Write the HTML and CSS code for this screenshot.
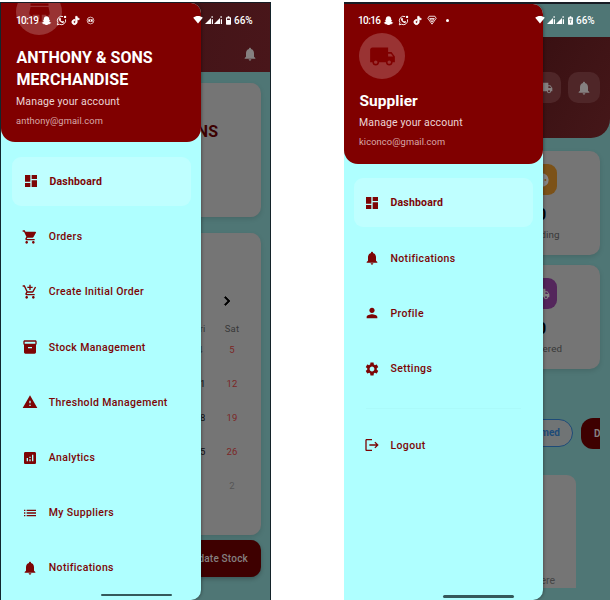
FILE: index.html
```
<!DOCTYPE html>
<html lang="en">
<head>
<meta charset="utf-8">
<title>Store and supplier menus</title>
<link rel="stylesheet" href="styles.css">
</head>
<body>
<svg class="defs" aria-hidden="true">
  <symbol id="dashboard" viewBox="0 0 24 24"><path d="M3 13h8V3H3v10zm0 8h8v-6H3v6zm10 0h8V11h-8v10zm0-18v6h8V3h-8z"/></symbol>
  <symbol id="cart" viewBox="0 0 24 24"><path d="M7 18c-1.1 0-1.99.9-1.99 2S5.9 22 7 22s2-.9 2-2-.9-2-2-2zM1 2v2h2l3.6 7.59-1.35 2.45c-.16.28-.25.61-.25.96 0 1.1.9 2 2 2h12v-2H7.42c-.14 0-.25-.11-.25-.25l.03-.12.9-1.63h7.45c.75 0 1.41-.41 1.75-1.03l3.58-6.49c.08-.14.12-.31.12-.48 0-.55-.45-1-1-1H5.21l-.94-2H1zm16 16c-1.1 0-1.99.9-1.99 2s.89 2 1.99 2 2-.9 2-2-.9-2-2-2z"/></symbol>
  <symbol id="cart-add" viewBox="0 0 24 24"><path d="M11 9h2V6h3V4h-3V1h-2v3H8v2h3v3zm-4 9c-1.1 0-1.99.9-1.99 2S5.9 22 7 22s2-.9 2-2-.9-2-2-2zm10 0c-1.1 0-1.99.9-1.99 2s.89 2 1.99 2 2-.9 2-2-.9-2-2-2zm-9.83-3.25l.03-.12.9-1.63h7.45c.75 0 1.41-.41 1.75-1.03l3.86-7.01L19.42 4h-.01l-1.1 2-2.76 5H8.53l-.13-.27L6.16 6l-.95-2-.94-2H1v2h2l3.6 7.59-1.35 2.45c-.16.28-.25.61-.25.96 0 1.1.9 2 2 2h12v-2H7.42c-.13 0-.25-.11-.25-.25z"/></symbol>
  <symbol id="inventory" viewBox="0 0 24 24"><path d="M20 2H4c-1 0-2 .9-2 2v3.01c0 .72.43 1.34 1 1.69V20c0 1.1 1.1 2 2 2h14c.9 0 2-.9 2-2V8.7c.57-.35 1-.97 1-1.69V4c0-1.1-1-2-2-2zm-5 12H9v-2h6v2zm5-7H4V4h16v3z"/></symbol>
  <symbol id="warning" viewBox="0 0 24 24"><path d="M1 21h22L12 2 1 21zm12-3h-2v-2h2v2zm0-4h-2v-4h2v4z"/></symbol>
  <symbol id="analytics" viewBox="0 0 24 24"><path d="M19 3H5c-1.1 0-2 .9-2 2v14c0 1.1.9 2 2 2h14c1.1 0 2-.9 2-2V5c0-1.1-.9-2-2-2zM9 17H7v-5h2v5zm4 0h-2v-3h2v3zm0-5h-2v-2h2v2zm4 5h-2V7h2v10z"/></symbol>
  <symbol id="list" viewBox="0 0 24 24"><path d="M3 13h2v-2H3v2zm0 4h2v-2H3v2zm0-8h2V7H3v2zm4 4h14v-2H7v2zm0 4h14v-2H7v2zM7 7v2h14V7H7z"/></symbol>
  <symbol id="bell" viewBox="0 0 24 24"><path d="M12 22c1.1 0 2-.9 2-2h-4c0 1.1.89 2 2 2zm6-6v-5c0-3.07-1.64-5.64-4.5-6.32V4c0-.83-.67-1.5-1.5-1.5s-1.5.67-1.5 1.5v.68C7.63 5.36 6 7.92 6 11v5l-2 2v1h16v-1l-2-2z"/></symbol>
  <symbol id="person" viewBox="0 0 24 24"><path d="M12 12c2.21 0 4-1.79 4-4s-1.79-4-4-4-4 1.79-4 4 1.79 4 4 4zm0 2c-2.67 0-8 1.34-8 4v2h16v-2c0-2.66-5.33-4-8-4z"/></symbol>
  <symbol id="settings" viewBox="0 0 24 24"><path d="M19.14 12.94c.04-.3.06-.61.06-.94 0-.32-.02-.64-.07-.94l2.03-1.58c.18-.14.23-.41.12-.61l-1.92-3.32c-.12-.22-.37-.29-.59-.22l-2.39.96c-.5-.38-1.03-.7-1.62-.94l-.36-2.54c-.04-.24-.24-.41-.48-.41h-3.84c-.24 0-.43.17-.47.41l-.36 2.54c-.59.24-1.13.57-1.62.94l-2.39-.96c-.22-.08-.47 0-.59.22L2.74 8.87c-.12.21-.08.47.12.61l2.03 1.58c-.05.3-.09.63-.09.94s.02.64.07.94l-2.03 1.58c-.18.14-.23.41-.12.61l1.92 3.32c.12.22.37.29.59.22l2.39-.96c.5.38 1.03.7 1.62.94l.36 2.54c.05.24.24.41.48.41h3.84c.24 0 .44-.17.47-.41l.36-2.54c.59-.24 1.13-.56 1.62-.94l2.39.96c.22.08.47 0 .59-.22l1.92-3.32c.12-.22.07-.47-.12-.61l-2.01-1.58zM12 15.6c-1.98 0-3.6-1.62-3.6-3.6s1.62-3.6 3.6-3.6 3.6 1.62 3.6 3.6-1.62 3.6-3.6 3.6z"/></symbol>
  <symbol id="logout" viewBox="0 0 24 24"><path d="M17 7l-1.41 1.41L18.17 11H8v2h10.17l-2.58 2.58L17 17l5-5zM4 5h8V3H4c-1.1 0-2 .9-2 2v14c0 1.1.9 2 2 2h8v-2H4V5z"/></symbol>
  <symbol id="truck" viewBox="0 0 24 24"><path d="M20 8h-3V4H3c-1.1 0-2 .9-2 2v11h2c0 1.66 1.34 3 3 3s3-1.34 3-3h6c0 1.66 1.34 3 3 3s3-1.34 3-3h2v-5l-3-4zM6 18.5c-.83 0-1.5-.67-1.5-1.5s.67-1.5 1.5-1.5 1.5.67 1.5 1.5-.67 1.5-1.5 1.5zm13.5-9l1.96 2.5H17V9.5h2.5zm-1.5 9c-.83 0-1.5-.67-1.5-1.5s.67-1.5 1.5-1.5 1.5.67 1.5 1.5-.67 1.5-1.5 1.5z"/></symbol>
  <symbol id="store" viewBox="0 0 24 24"><path d="M20 4H4v2h16V4zm1 10v-2l-1-5H4l-1 5v2h1v6h10v-6h4v6h2v-6h1zm-9 4H6v-4h6v4z"/></symbol>
  <symbol id="pending" viewBox="0 0 24 24"><path fill-rule="evenodd" d="M12 2a10 10 0 1 0 0 20 10 10 0 0 0 0-20zM7 10.500a1.500 1.500 0 1 1 0 3 1.500 1.500 0 0 1 0-3zm5 0a1.500 1.500 0 1 1 0 3 1.500 1.500 0 0 1 0-3zm5 0a1.500 1.500 0 1 1 0 3 1.500 1.500 0 0 1 0-3z"/></symbol>
  <symbol id="chevron" viewBox="0 0 24 24"><path d="M10 6L8.590 7.410 13.170 12l-4.580 4.590L10 18l6-6z"/></symbol>
  <symbol id="ghost" viewBox="0 0 24 24"><path d="M12 2.500c-3.800 0-5.800 2.700-5.800 5.800v2.200l-2.200.2c0 1.300 1.500 1.700 2 2.200-.6 2-2.400 3.500-4.500 4.100.2 1.300 1.900 1.500 3.200 1.800.2.800.3 1.200.9 1.300 1 0 2-.3 3.200.6 1 .8 2 1.300 3.200 1.300s2.200-.5 3.200-1.300c1.200-.9 2.200-.6 3.200-.6.6-.1.7-.5.900-1.300 1.300-.3 3-.5 3.200-1.800-2.100-.6-3.900-2.100-4.500-4.100.5-.5 2-.9 2-2.200l-2.200-.2V8.300c0-3.100-2-5.800-5.800-5.800z"/></symbol>
  <symbol id="chat" viewBox="0 0 24 24"><path d="M15.500 3.400A9.300 9.300 0 0 0 4.200 16.800L2.800 21.500l4.900-1.300A9.300 9.300 0 0 0 20.800 9.500" fill="none" stroke="currentColor" stroke-width="2"/><path d="M8.200 6.500l1.600.2 1.200 2.700-1.100 1.500c1 1.800 2 2.700 3.800 3.400l1.300-1.400 2.700 1.300c.2 2.300-1.600 3.200-3.200 3-4-.7-8-4.600-8-8.100 0-1 .8-2.200 1.700-2.600z"/><circle cx="19.800" cy="4.200" r="2.600"/></symbol>
  <symbol id="note" viewBox="0 0 24 24"><path stroke="currentColor" stroke-width="1.800" d="M16.600 5.820A4.278 4.278 0 0 1 15.540 3h-3.090v12.400a2.592 2.592 0 0 1-2.590 2.500c-1.420 0-2.600-1.160-2.600-2.600 0-1.720 1.660-3.010 3.370-2.480V9.660c-3.450-.46-6.470 2.220-6.470 5.640 0 3.330 2.760 5.700 5.690 5.700 3.140 0 5.690-2.550 5.690-5.700V9.010a7.350 7.350 0 0 0 4.300 1.380V7.300s-1.880.09-3.240-1.480z"/></symbol>
  <symbol id="badge" viewBox="0 0 24 24"><g fill="none" stroke="currentColor" stroke-width="1.800"><circle cx="12" cy="12" r="9"/><path d="M6 9.500h12M6 14.500h12" stroke-width="1.500"/></g><circle cx="8.500" cy="12" r="2.500"/><circle cx="15.500" cy="12" r="2.500"/></symbol>
  <symbol id="shield" viewBox="0 0 24 24"><g fill="none" stroke="currentColor" stroke-width="2"><path d="M5 3h14l3 5-10 14L2 8z"/><path d="M6.500 8.500h11L12 17z"/></g><circle cx="12" cy="11" r="1.500"/></symbol>
  <symbol id="wifi" viewBox="0 0 24 20"><path d="M0 4.500C3.200 1.700 7.500 0 12 0s8.800 1.700 12 4.500L12 19z"/></symbol>
  <symbol id="signal" viewBox="0 0 20 20"><path d="M0 20L15 5v15z"/><path d="M17 8h3v12h-3zM16.500 0h2.500v5h-2.500z"/></symbol>
  <symbol id="battery" viewBox="0 0 12 20"><path fill-rule="evenodd" d="M4 0h4v2h2.500A1.500 1.500 0 0 1 12 3.500v15a1.500 1.500 0 0 1-1.500 1.500h-9A1.500 1.500 0 0 1 0 18.500v-15A1.500 1.500 0 0 1 1.500 2H4zM2.500 5v4h7V5z"/></symbol>
  <symbol id="battery-charge" viewBox="0 0 12 20"><path fill-rule="evenodd" d="M4 0h4v2h2.500A1.500 1.500 0 0 1 12 3.500v15a1.500 1.500 0 0 1-1.500 1.500h-9A1.500 1.500 0 0 1 0 18.500v-15A1.500 1.500 0 0 1 1.500 2H4zM3 6v2h6V6zm1.500 4v2h1v4h1.500v-4h1v-2z"/></symbol>
</svg>

<main class="stage">
  <section class="phone phone-store">
    <div class="app">
      <header class="store-bar"><svg class="ic16"><use href="#bell"/></svg></header>
      <div class="store-body">
        <div class="card welcome"><h2>SONS</h2></div>
        <div class="card calendar">
          <svg class="next"><use href="#chevron"/></svg>
          <div class="week head"><span>Fri</span><span>Sat</span></div>
          <div class="week"><span class="today">4</span><span class="off">5</span></div>
          <div class="week"><span>11</span><span class="off">12</span></div>
          <div class="week"><span>18</span><span class="off">19</span></div>
          <div class="week"><span>25</span><span class="off">26</span></div>
          <div class="week"><span></span><span class="out">2</span></div>
        </div>
        <div class="update">Update Stock</div>
      </div>
    </div>
    <aside class="drawer">
      <header class="profile">
        <div class="avatar"><svg><use href="#store"/></svg></div>
        <h1>ANTHONY &amp; SONS<br>MERCHANDISE</h1>
        <p class="sub">Manage your account</p>
        <p class="mail">anthony@gmail.com</p>
      </header>
      <nav class="menu">
        <a class="item active"><svg><use href="#dashboard"/></svg><span>Dashboard</span></a>
        <a class="item"><svg><use href="#cart"/></svg><span>Orders</span></a>
        <a class="item"><svg><use href="#cart-add"/></svg><span>Create Initial Order</span></a>
        <a class="item"><svg><use href="#inventory"/></svg><span>Stock Management</span></a>
        <a class="item"><svg><use href="#warning"/></svg><span>Threshold Management</span></a>
        <a class="item"><svg><use href="#analytics"/></svg><span>Analytics</span></a>
        <a class="item"><svg><use href="#list"/></svg><span>My Suppliers</span></a>
        <a class="item"><svg><use href="#bell"/></svg><span>Notifications</span></a>
      </nav>
    </aside>
    <div class="status">
      <span class="clock">10:19</span>
      <svg class="app-ic"><use href="#ghost"/></svg><svg class="app-ic"><use href="#chat"/></svg><svg class="app-ic"><use href="#note"/></svg><svg class="app-ic small"><use href="#badge"/></svg>
      <span class="grow"></span>
      <svg class="wifi"><use href="#wifi"/></svg><svg class="sig"><use href="#signal"/></svg><svg class="sig"><use href="#signal"/></svg><svg class="bat"><use href="#battery"/></svg>
      <span class="pct">66%</span>
    </div>
    <div class="home"></div>
  </section>

  <section class="phone phone-supplier">
    <div class="app">
      <header class="supplier-bar">
        <span class="tile"><svg class="ic16"><use href="#truck"/></svg></span>
        <span class="tile"><svg class="ic16"><use href="#bell"/></svg></span>
      </header>
      <div class="supplier-body">
        <div class="card stat">
          <div class="stat-in"><span class="chip-ic amber"><svg class="ic16"><use href="#pending"/></svg></span><b>0</b><small>Pending</small></div>
        </div>
        <div class="card stat">
          <div class="stat-in"><span class="chip-ic purple"><svg class="ic16"><use href="#truck"/></svg></span><b>0</b><small>Delivered</small></div>
        </div>
        <div class="chips"><span class="chip">Confirmed</span><span class="chip-red">D</span></div>
        <div class="panel">here</div>
      </div>
    </div>
    <aside class="drawer">
      <header class="profile">
        <div class="avatar"><svg><use href="#truck"/></svg></div>
        <h1>Supplier</h1>
        <p class="sub">Manage your account</p>
        <p class="mail">kiconco@gmail.com</p>
      </header>
      <nav class="menu">
        <a class="item active"><svg><use href="#dashboard"/></svg><span>Dashboard</span></a>
        <a class="item"><svg><use href="#bell"/></svg><span>Notifications</span></a>
        <a class="item"><svg><use href="#person"/></svg><span>Profile</span></a>
        <a class="item"><svg><use href="#settings"/></svg><span>Settings</span></a>
        <hr>
        <a class="item"><svg><use href="#logout"/></svg><span>Logout</span></a>
      </nav>
    </aside>
    <div class="status">
      <span class="clock">10:16</span>
      <svg class="app-ic"><use href="#ghost"/></svg><svg class="app-ic"><use href="#chat"/></svg><svg class="app-ic"><use href="#note"/></svg><svg class="app-ic shield"><use href="#shield"/></svg><i class="more"></i>
      <span class="grow"></span>
      <svg class="wifi"><use href="#wifi"/></svg><svg class="sig"><use href="#signal"/></svg><svg class="sig"><use href="#signal"/></svg><svg class="bat"><use href="#battery-charge"/></svg>
      <span class="pct">66%</span>
    </div>
    <div class="home"></div>
  </section>
</main>
</body>
</html>
```
FILE: styles.css
```
* { box-sizing: border-box; }
body { margin: 0; background: #fff; font-family: Roboto, "Liberation Sans", sans-serif; overflow: hidden; }
h1, h2, p { margin: 0; }
svg { fill: currentColor; display: block; flex: none; }
.defs { position: absolute; width: 0; height: 0; }
.ic16 { width: 16px; height: 16px; }

.stage { display: flex; justify-content: space-between; height: 600px; padding-top: 2px; }
.phone { position: relative; height: 598px; overflow: hidden; background: #4f7675; border-top: 2px solid #171c24; }
.phone-store { width: 271px; border-top-width: 1px; border-left: 1px solid #10282e; border-right: 1px solid #14232a; }
.phone-supplier { width: 266px; }
.app { height: 100%; }

.card { background: #757575; border-radius: 10px; box-shadow: 0 2px 5px rgba(0, 0, 0, .12); }

/* Store screen */
.store-bar { height: 69px; display: flex; justify-content: flex-end; padding: 43px 12px 0 0; color: #858080; background: linear-gradient(100deg, #381013, #49161a); }
.store-body { padding: 11px 9px 0 11px; }
.welcome { height: 134px; padding: 39px 43px 0 0; text-align: right; }
.welcome h2 { font-size: 16px; line-height: 20px; font-weight: 700; color: #3c0000; white-space: nowrap; }
.calendar { height: 302px; margin-top: 16px; padding: 59px 13px 0 0; }
.next { width: 18px; height: 18px; margin: 0 12.500px 0 auto; color: #000; stroke: #000; }
.week { height: 34px; display: flex; justify-content: flex-end; align-items: center; font-size: 9.500px; color: #111; }
.week span { width: 32px; text-align: center; letter-spacing: .2px; }
.week.head { height: 20px; margin-top: 8px; margin-bottom: -6px; color: #383838; }
.week .today { color: #333; }
.week .off { color: #7c2626; }
.week .out { color: #555; }
.update { height: 37px; margin-top: 5px; padding-right: 13px; border-radius: 10px; background: #3e0000; color: #858080; text-align: right; font-size: 10px; font-weight: 500; line-height: 37px; letter-spacing: .2px; box-shadow: 0 2px 4px rgba(0, 0, 0, .25); }

/* Supplier screen */
.supplier-bar { height: 101px; margin-top: 33px; padding: 35px 10px 0 0; display: flex; justify-content: flex-end; gap: 7px; border-bottom-right-radius: 19px; background: linear-gradient(120deg, #391012 60%, #451719); }
.tile { width: 32px; height: 31px; border-radius: 10px; display: flex; align-items: center; justify-content: center; background: #4f2628; color: #858080; }
.supplier-body { padding: 13px 10px 0 0; }
.stat { height: 104px; margin-bottom: 10px; display: flex; justify-content: flex-end; padding: 13px 0 0; }
.stat-in { width: 100px; display: flex; flex-direction: column; align-items: center; margin-right: 8.500px; }
.chip-ic { width: 31px; height: 31px; border-radius: 9px; display: flex; align-items: center; justify-content: center; color: #858585; }
.amber { background: #7c5218; }
.purple { background: #54265c; }
.stat b { margin-top: 11px; font-size: 16px; line-height: 18px; color: #000; }
.stat small { margin-top: 4px; font-size: 9.800px; line-height: 14px; letter-spacing: .1px; color: #383838; }
.chips { height: 32px; margin-top: 48px; display: flex; justify-content: flex-end; align-items: center; gap: 8px; overflow: hidden; }
.chip { height: 28px; padding: 0 12px; border: 1px solid #1d4b78; border-radius: 14px; background: #707475; color: #1d4b78; font-size: 10px; line-height: 26px; font-weight: 700; }
.chip-red { width: 19px; height: 31px; padding-left: 13px; border-radius: 12px 0 0 12px; background: #3e0000; color: #858080; font-size: 10px; line-height: 31px; font-weight: 700; overflow: hidden; }
.panel { height: 113px; margin: 26px 24px 0 0; padding: 98px 21px 0 0; border-top-right-radius: 9px; background: #757575; color: #444; text-align: right; font-size: 10.500px; line-height: 15px; }

/* Navigation drawer */
.drawer { position: absolute; top: 0; left: 0; bottom: 0; width: 199.500px; border-radius: 0 10px 10px 0; overflow: hidden; background: #afffff; box-shadow: 1px 0 3px rgba(0, 0, 0, .3); }
.phone-supplier .drawer { width: 198.500px; }
.profile { height: 139px; padding: 0 15px; border-radius: 0 0 14px 14px; background: #800000; overflow: hidden; color: #fff; }
.phone-supplier .profile { height: 159.500px; }
.avatar { width: 46px; height: 46px; border-radius: 50%; display: flex; align-items: center; justify-content: center; background: #993333; color: #800000; margin-top: -14px; }
.avatar svg { width: 27px; height: 27px; }
.phone-supplier .avatar { margin-top: 29px; }
.profile h1 { margin-top: 12px; padding-left: .500px; font-size: 16px; line-height: 22px; font-weight: 700; letter-spacing: .05px; white-space: nowrap; }
.phone-supplier h1 { margin-top: 11px; font-size: 15.500px; }
.profile p { white-space: nowrap; }
.sub { margin-top: 3px; font-size: 10.500px; line-height: 15px; letter-spacing: .15px; color: #ecd5d5; }
.phone-supplier .sub { margin-top: 2.500px; }
.mail { margin-top: 5px; font-size: 9.300px; line-height: 14px; letter-spacing: .1px; color: #d9a9a9; }
.menu { padding: 14.500px 10px 0 10.500px; }
.phone-supplier .menu { padding-left: 9.500px; }
.item { height: 49px; margin-bottom: 6.200px; padding-left: 10.300px; display: flex; align-items: center; gap: 11px; color: #7d0505; font-size: 10.500px; font-weight: 500; letter-spacing: .35px; white-space: nowrap; }
.item svg { width: 16px; height: 16px; }
.item.active { background: #bfffff; border-radius: 9px; font-weight: 700; padding-left: 11px; margin-bottom: 6.800px; letter-spacing: .2px; }
.menu hr { height: 1px; margin: 15px 12px 11.500px; border: 0; background: #abfafa; }
.phone-supplier .item { padding-left: 10px; }

/* System bars */
.status { position: absolute; top: 10px; left: 15px; right: 17px; height: 14px; display: flex; align-items: center; color: #fff; font-size: 10px; font-weight: 500; }
.phone-supplier .status { left: 14px; right: 15px; top: 9px; }
.clock { width: 25px; letter-spacing: -.6px; white-space: nowrap; }
.app-ic { width: 11px; height: 11px; margin-right: 3.500px; }
.app-ic.small { width: 9px; height: 9px; margin-left: 1px; }
.app-ic.shield { width: 10px; height: 10px; }
.more { width: 3px; height: 3px; margin-left: 6px; border-radius: 50%; background: #fff; }
.grow { flex: 1; }
.wifi { width: 10px; height: 8px; }
.sig { width: 8px; height: 8px; margin-left: 1.500px; }
.bat { width: 5px; height: 9px; margin: 0 3px 0 4px; }
.pct { width: 19px; white-space: nowrap; }
.home { position: absolute; bottom: 4px; left: 99.500px; width: 71px; height: 2.500px; border-radius: 2px; background: #34595b; }
.phone-supplier .home { left: 98.500px; bottom: 2.500px; }
```
